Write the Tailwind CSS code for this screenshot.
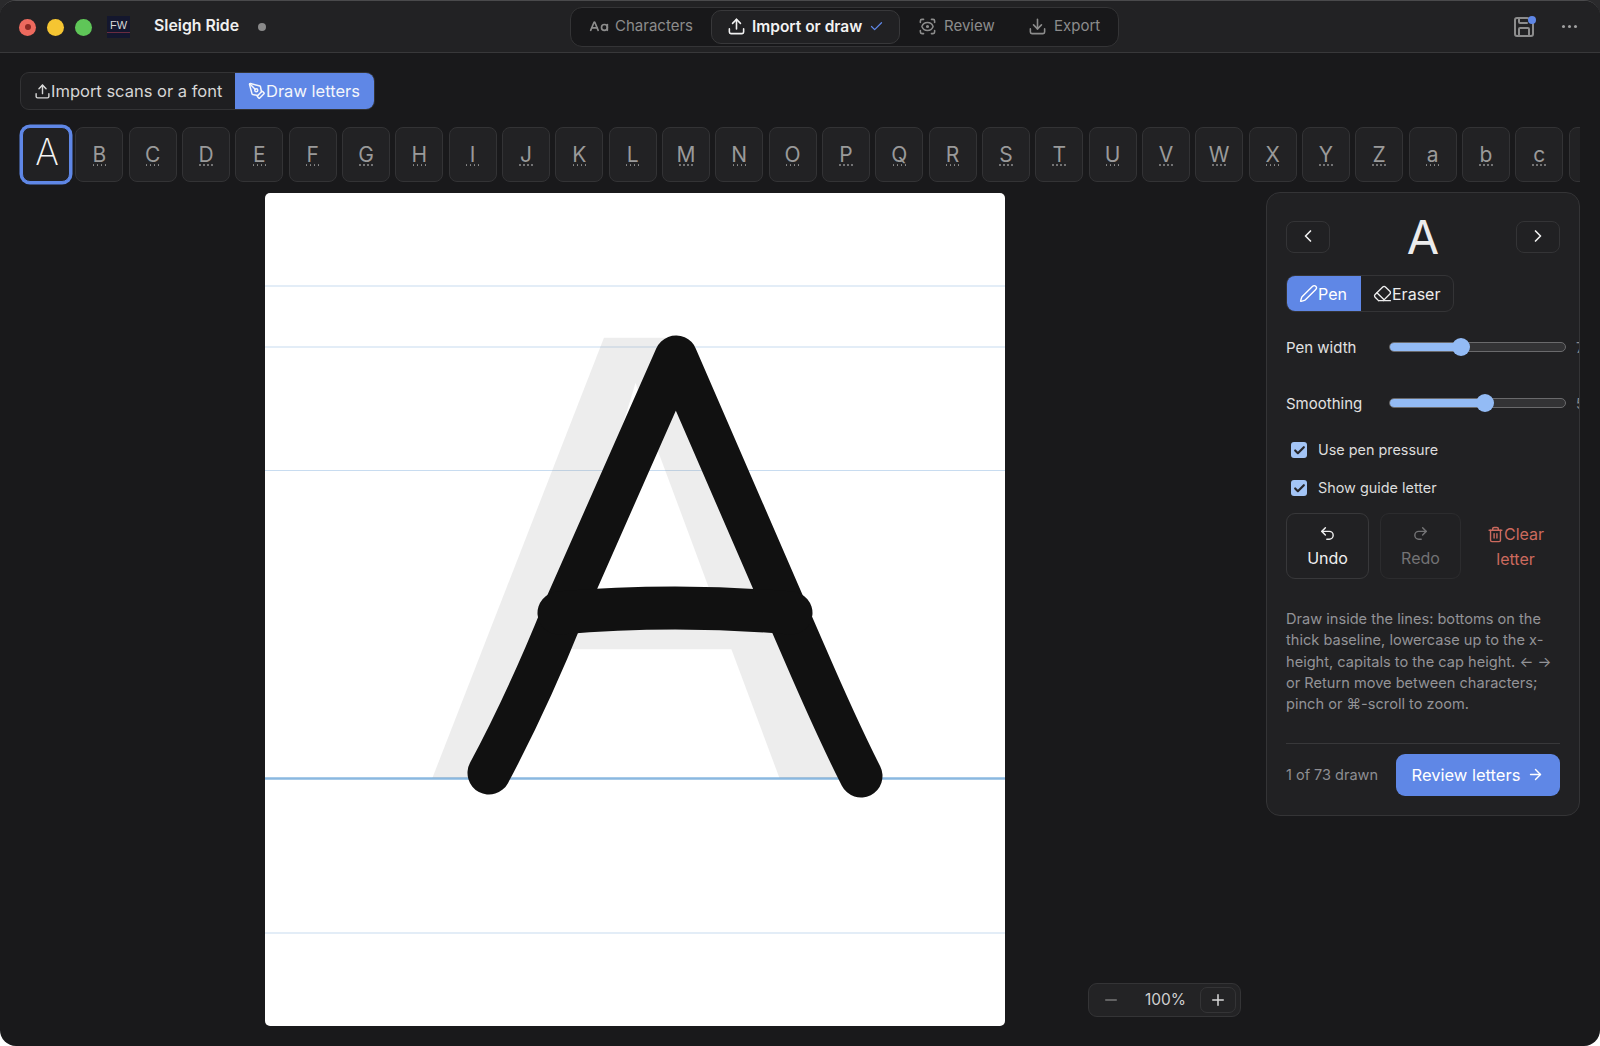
<!DOCTYPE html>
<html lang="en">

<head>
    <meta charset="UTF-8">
    <title>Sleigh Ride</title>
    <script src="https://cdn.jsdelivr.net/npm/@tailwindcss/browser@4"></script>
</head>

<body class="bg-[linear-gradient(#2a2a2c_0,#2a2a2c_60px,#fff_60px)] overflow-hidden font-[Inter,sans-serif]">

    <div class="w-[1600px] h-[1046px] flex flex-col bg-[#19191b] rounded-[16px] overflow-hidden border-t border-[#4a4a4c]">

        <!-- Title bar -->
        <header class="h-[52px] shrink-0 flex items-center bg-[#222224] border-b border-[#38383a]">
            <div class="w-[570px] shrink-0 flex items-center pl-[19px]">
                <span class="mt-[1px] w-[17px] h-[17px] rounded-full bg-[#ed6a5e] flex items-center justify-center"><span class="w-[6px] h-[6px] rounded-full bg-[#8c2a24]"></span></span>
                <span class="mt-[1px] w-[17px] h-[17px] rounded-full bg-[#f5c532] ml-[11px]"></span>
                <span class="mt-[1px] w-[17px] h-[17px] rounded-full bg-[#5fc658] ml-[11px]"></span>
                <span class="w-[23px] h-[22px] ml-[15px] pt-[3px] bg-[#14172e] text-center">
                    <span class="block h-[14px] leading-[13px] text-[11px] text-[#d8d8d8] border-b border-[#6a2c40] font-[Liberation_Sans,sans-serif]">FW</span>
                </span>
                <span class="ml-[24px] -mt-[1px] text-[15.8px] font-semibold text-[#f0f0f0]">Sleigh Ride</span>
                <span class="ml-[19px] w-[8px] h-[8px] rounded-full bg-[#8a8a8a]"></span>
            </div>

            <!-- Steps -->
            <nav class="w-[549px] shrink-0 h-[40px] flex items-center gap-[2px] p-[2px] rounded-[12px] bg-[#18181a] border border-[#343436] text-[15px] text-[#8c8c8c]">
                <span class="h-[34px] w-[136px] pl-[16px] flex items-center gap-[6px]">
                    <svg class="w-[20px] h-[20px]" viewBox="0 0 24 24" fill="none" stroke="currentColor" stroke-width="2" stroke-linecap="round" stroke-linejoin="round"><path d="m2 16 4.039-9.69a.5.5 0 0 1 .923 0L11 16"/><path d="M22 9v7"/><path d="M3.304 13h6.392"/><circle cx="18.5" cy="12.5" r="3.5"/></svg>
                    Characters
                </span>
                <span class="h-[34px] w-[189px] pl-[15px] flex items-center rounded-[10px] bg-[#212123] border border-[#38383a] text-[15.5px] text-[#f2f2f2] font-semibold">
                    <svg class="w-[19px] h-[19px] mr-[6px]" viewBox="0 0 24 24" fill="none" stroke="currentColor" stroke-width="2" stroke-linecap="round" stroke-linejoin="round"><path d="M21 15v4a2 2 0 0 1-2 2H5a2 2 0 0 1-2-2v-4"/><polyline points="17 8 12 3 7 8"/><line x1="12" y1="3" x2="12" y2="15"/></svg>
                    Import or draw
                    <svg class="w-[15px] h-[15px] ml-[7px] text-[#5f87e6]" viewBox="0 0 24 24" fill="none" stroke="currentColor" stroke-width="2" stroke-linecap="round" stroke-linejoin="round"><path d="M20 6 9 17l-5-5"/></svg>
                </span>
                <span class="h-[34px] w-[108px] pl-[16px] flex items-center gap-[7px]">
                    <svg class="w-[19px] h-[19px]" viewBox="0 0 24 24" fill="none" stroke="currentColor" stroke-width="2" stroke-linecap="round" stroke-linejoin="round"><path d="M3 7V5a2 2 0 0 1 2-2h2"/><path d="M17 3h2a2 2 0 0 1 2 2v2"/><path d="M21 17v2a2 2 0 0 1-2 2h-2"/><path d="M7 21H5a2 2 0 0 1-2-2v-2"/><circle cx="12" cy="12" r="1"/><path d="M18.944 12.33a1 1 0 0 0 0-.66 7.5 7.5 0 0 0-13.888 0 1 1 0 0 0 0 .66 7.5 7.5 0 0 0 13.888 0"/></svg>
                    Review
                </span>
                <span class="h-[34px] pl-[16px] flex items-center gap-[7px]">
                    <svg class="w-[19px] h-[19px]" viewBox="0 0 24 24" fill="none" stroke="currentColor" stroke-width="2" stroke-linecap="round" stroke-linejoin="round"><path d="M21 15v4a2 2 0 0 1-2 2H5a2 2 0 0 1-2-2v-4"/><polyline points="7 10 12 15 17 10"/><line x1="12" y1="15" x2="12" y2="3"/></svg>
                    Export
                </span>
            </nav>

            <div class="flex-1 flex items-center justify-end pr-[23px] text-[#8c8c8c]">
                <span class="relative">
                    <svg class="w-[24px] h-[24px]" viewBox="0 0 24 24" fill="none" stroke="currentColor" stroke-width="2" stroke-linecap="round" stroke-linejoin="round"><path d="M15.2 3a2 2 0 0 1 1.4.6l3.8 3.8a2 2 0 0 1 .6 1.4V19a2 2 0 0 1-2 2H5a2 2 0 0 1-2-2V5a2 2 0 0 1 2-2z"/><path d="M17 21v-7a1 1 0 0 0-1-1H8a1 1 0 0 0-1 1v7"/><path d="M7 3v4a1 1 0 0 0 1 1h7"/></svg>
                    <span class="absolute top-[1px] right-0 w-[8px] h-[8px] rounded-full bg-[#5f87e6]"></span>
                </span>
                <span class="ml-[26px] flex gap-[3px]">
                    <span class="w-[3px] h-[3px] rounded-full bg-[#a0a0a0]"></span>
                    <span class="w-[3px] h-[3px] rounded-full bg-[#a0a0a0]"></span>
                    <span class="w-[3px] h-[3px] rounded-full bg-[#a0a0a0]"></span>
                </span>
            </div>
        </header>

        <!-- Import / draw switch -->
        <div class="mt-[19px] ml-[20px] w-fit h-[38px] flex rounded-[9px] border border-[#333335] bg-[#1f1f21] overflow-hidden text-[16.5px] shrink-0">
            <span class="w-[214px] pl-[13px] flex items-center text-[#d6d6d6]">
                <svg class="w-[17px] h-[17px]" viewBox="0 0 24 24" fill="none" stroke="currentColor" stroke-width="2" stroke-linecap="round" stroke-linejoin="round"><path d="M21 15v4a2 2 0 0 1-2 2H5a2 2 0 0 1-2-2v-4"/><polyline points="17 8 12 3 7 8"/><line x1="12" y1="3" x2="12" y2="15"/></svg>
                Import scans or a font
            </span>
            <span class="w-[139px] pl-[13px] flex items-center bg-[#5f87e6] text-[#f4f6fb]">
                <svg class="w-[18px] h-[18px]" viewBox="0 0 24 24" fill="none" stroke="currentColor" stroke-width="2" stroke-linecap="round" stroke-linejoin="round"><path d="M15.707 21.293a1 1 0 0 1-1.414 0l-1.586-1.586a1 1 0 0 1 0-1.414l5.586-5.586a1 1 0 0 1 1.414 0l1.586 1.586a1 1 0 0 1 0 1.414z"/><path d="m18 13-1.375-6.874a1 1 0 0 0-.746-.776L3.235 2.028a1 1 0 0 0-1.207 1.207L5.35 15.879a1 1 0 0 0 .776.746L13 18"/><path d="m2.3 2.3 7.286 7.286"/><circle cx="11" cy="11" r="2"/></svg>
                Draw letters
            </span>
        </div>

        <!-- Glyph strip -->
        <div id="tiras" class="mt-[14px] ml-[19px] w-[1561px] h-[61px] pl-[3px] pt-[3px] flex gap-[5.33px] overflow-hidden shrink-0"></div>

        <!-- Canvas + panel -->
        <main class="flex-1 flex gap-[15px] pl-[20px] pr-[20px] pt-[8px] min-h-0">
            <div class="relative flex-1 flex justify-center pr-[2px]">
                <svg class="w-[740px] h-[833px] rounded-[5px] bg-white" viewBox="-1 0 740 833">
                    <g stroke="#c8dcf0" stroke-width="1.2">
                        <line x1="-1" y1="93" x2="739" y2="93"/>
                        <line x1="-1" y1="154" x2="739" y2="154"/>
                        <line x1="-1" y1="277.5" x2="739" y2="277.5"/>
                        <line x1="-1" y1="740" x2="739" y2="740"/>
                    </g>
                    <line x1="-1" y1="585.5" x2="739" y2="585.5" stroke="#8ab8e0" stroke-width="2.5"/>
                    <text transform="translate(369 585) scale(0.955 1)" text-anchor="middle" font-family="Liberation Sans" font-size="640" fill="#9a9a9a" fill-opacity="0.18">A</text>
                    <g fill="none" stroke="#111" stroke-width="43" stroke-linecap="round" stroke-linejoin="round">
                        <path d="M223 580C254 522 274 477 297 420L410 164L521 420C544 472 564 522 595 583"/>
                        <path d="M293 420Q409 410 525 420"/>
                    </g>
                </svg>

                <!-- Zoom -->
                <div class="absolute right-[10px] bottom-[29px] w-[153px] h-[34px] flex items-center justify-between pl-[5px] pr-[8px] rounded-[9px] bg-[#232325] border border-[#343436] text-[15.5px] text-[#d0d0d0]">
                    <span class="w-[34px] h-[26px] flex items-center justify-center rounded-[7px] text-[#777]">
                        <svg class="w-[18px] h-[18px]" viewBox="0 0 24 24" fill="none" stroke="currentColor" stroke-width="2" stroke-linecap="round"><path d="M5 12h14"/></svg>
                    </span>
                    <span class="ml-[3px]">100%</span>
                    <span class="w-[36px] h-[26px] -mr-[4px] flex items-center justify-center rounded-[7px] border border-[#343436] text-[#d8d8d8]">
                        <svg class="w-[18px] h-[18px]" viewBox="0 0 24 24" fill="none" stroke="currentColor" stroke-width="2" stroke-linecap="round"><path d="M5 12h14"/><path d="M12 5v14"/></svg>
                    </span>
                </div>
            </div>

            <!-- Side panel -->
            <aside class="w-[314px] h-[624px] shrink-0 -mt-[1px] px-[19px] pt-[28px] rounded-[14px] bg-[#212123] border border-[#343436] overflow-hidden">
                <div class="h-[32px] flex items-center justify-between">
                    <span class="w-[44px] h-[32px] flex items-center justify-center rounded-[8px] border border-[#343436] text-[#f0f0f0]">
                        <svg class="w-[20px] h-[20px] -mt-[2px]" viewBox="0 0 24 24" fill="none" stroke="currentColor" stroke-width="2" stroke-linecap="round" stroke-linejoin="round"><path d="m15 18-6-6 6-6"/></svg>
                    </span>
                    <span class="text-[47px] leading-[32px] text-[#ececec] font-normal">A</span>
                    <span class="w-[44px] h-[32px] flex items-center justify-center rounded-[8px] border border-[#343436] text-[#f0f0f0]">
                        <svg class="w-[20px] h-[20px] -mt-[2px]" viewBox="0 0 24 24" fill="none" stroke="currentColor" stroke-width="2" stroke-linecap="round" stroke-linejoin="round"><path d="m9 18 6-6-6-6"/></svg>
                    </span>
                </div>

                <div class="mt-[22px] w-[168px] h-[37px] flex rounded-[9px] border border-[#343436] overflow-hidden text-[16px] text-[#ececec]">
                    <span class="w-[74px] pl-[12px] flex items-center bg-[#5f87e6] text-white">
                        <svg class="w-[19px] h-[19px]" viewBox="0 0 24 24" fill="none" stroke="currentColor" stroke-width="1.75" stroke-linecap="round" stroke-linejoin="round"><path d="M21.174 6.812a1 1 0 0 0-3.986-3.987L3.842 16.174a2 2 0 0 0-.5.83l-1.321 4.352a.5.5 0 0 0 .623.622l4.353-1.32a2 2 0 0 0 .83-.497z"/></svg>
                        Pen
                    </span>
                    <span class="flex-1 pl-[12px] flex items-center">
                        <svg class="w-[19px] h-[19px]" viewBox="0 0 24 24" fill="none" stroke="currentColor" stroke-width="1.75" stroke-linecap="round" stroke-linejoin="round"><path d="m7 21-4.3-4.3c-1-1-1-2.5 0-3.4l9.6-9.6c1-1 2.5-1 3.4 0l5.6 5.6c1 1 1 2.5 0 3.4L13 21"/><path d="M22 21H7"/><path d="m5 11 9 9"/></svg>
                        Eraser
                    </span>
                </div>

                <!-- Sliders -->
                <div class="mt-[25px] h-[20px] flex items-center text-[15px] text-[#e2e2e2]">
                    <span class="w-[103px] shrink-0 mt-[2px]">Pen width</span>
                    <span class="relative w-[177px] h-[10px] shrink-0 rounded-full bg-[#333335] border border-[#6a6a6c]">
                        <span class="absolute left-0 top-0 bottom-0 w-[72px] rounded-l-full bg-[#93bbf5]"></span>
                        <span class="absolute left-[62px] -top-[5px] w-[18px] h-[18px] rounded-full bg-[#93bbf5]"></span>
                    </span>
                    <span class="ml-[10px] shrink-0 text-[#8c8c8c] text-[14px]">7</span>
                </div>
                <div class="mt-[36px] h-[20px] flex items-center text-[15px] text-[#e2e2e2]">
                    <span class="w-[103px] shrink-0 mt-[2px]">Smoothing</span>
                    <span class="relative w-[177px] h-[10px] shrink-0 rounded-full bg-[#333335] border border-[#6a6a6c]">
                        <span class="absolute left-0 top-0 bottom-0 w-[96px] rounded-l-full bg-[#93bbf5]"></span>
                        <span class="absolute left-[86px] -top-[5px] w-[18px] h-[18px] rounded-full bg-[#93bbf5]"></span>
                    </span>
                    <span class="ml-[10px] shrink-0 text-[#8c8c8c] text-[14px]">5</span>
                </div>

                <!-- Checks -->
                <label class="mt-[27px] h-[20px] pl-[5px] flex items-center gap-[11px] text-[14.4px] text-[#dcdcdc]">
                    <span class="w-[16px] h-[16px] rounded-[3px] bg-[#a3c4f5] flex items-center justify-center text-[#26262a]">
                        <svg class="w-[13px] h-[13px]" viewBox="0 0 24 24" fill="none" stroke="currentColor" stroke-width="4" stroke-linecap="round" stroke-linejoin="round"><path d="M20 6 9 17l-5-5"/></svg>
                    </span>
                    Use pen pressure
                </label>
                <label class="mt-[18px] h-[20px] pl-[5px] flex items-center gap-[11px] text-[14.4px] text-[#dcdcdc]">
                    <span class="w-[16px] h-[16px] rounded-[3px] bg-[#a3c4f5] flex items-center justify-center text-[#26262a]">
                        <svg class="w-[13px] h-[13px]" viewBox="0 0 24 24" fill="none" stroke="currentColor" stroke-width="4" stroke-linecap="round" stroke-linejoin="round"><path d="M20 6 9 17l-5-5"/></svg>
                    </span>
                    Show guide letter
                </label>

                <!-- Actions -->
                <div class="mt-[15px] h-[66px] flex gap-[11px] text-[16px] leading-[25px]">
                    <span class="w-[83px] pt-[3px] flex flex-col items-center justify-center rounded-[9px] border border-[#38383a] text-[#f0f0f0]">
                        <svg class="w-[17px] h-[17px] mb-[4px]" viewBox="0 0 24 24" fill="none" stroke="currentColor" stroke-width="2" stroke-linecap="round" stroke-linejoin="round"><path d="M9 14 4 9l5-5"/><path d="M4 9h10.5a5.5 5.5 0 0 1 5.5 5.5a5.5 5.5 0 0 1-5.5 5.5H11"/></svg>
                        Undo
                    </span>
                    <span class="w-[81px] pt-[3px] flex flex-col items-center justify-center rounded-[9px] border border-[#2c2c2e] text-[#737375]">
                        <svg class="w-[17px] h-[17px] mb-[4px]" viewBox="0 0 24 24" fill="none" stroke="currentColor" stroke-width="2" stroke-linecap="round" stroke-linejoin="round"><path d="m15 14 5-5-5-5"/><path d="M20 9H9.5A5.5 5.5 0 0 0 4 14.5A5.5 5.5 0 0 0 9.5 20H13"/></svg>
                        Redo
                    </span>
                    <span class="flex-1 pt-[1px] -ml-[1px] flex flex-col items-center justify-center text-[#cc6a5e]">
                        <span class="flex items-center">
                            <svg class="w-[17px] h-[17px]" viewBox="0 0 24 24" fill="none" stroke="currentColor" stroke-width="2" stroke-linecap="round" stroke-linejoin="round"><path d="M3 6h18"/><path d="M19 6v14c0 1-1 2-2 2H7c-1 0-2-1-2-2V6"/><path d="M8 6V4c0-1 1-2 2-2h4c1 0 2 1 2 2v2"/><line x1="10" y1="11" x2="10" y2="17"/><line x1="14" y1="11" x2="14" y2="17"/></svg>
                            Clear
                        </span>
                        letter
                    </span>
                </div>

                <p class="mt-[30px] text-[14.6px] leading-[21.3px] text-[#939397]">Draw inside the lines: bottoms on the thick baseline, lowercase up to the x-height, capitals to the cap height. ← → or Return move between characters; pinch or ⌘-scroll to zoom.</p>

                <div class="mt-[28px] pt-[10px] border-t border-[#38383a] flex items-center justify-between">
                    <span class="-mt-[2px] text-[14.5px] text-[#8e8e92]">1 of 73 drawn</span>
                    <span class="w-[164px] h-[42px] pb-[1px] flex items-center justify-center gap-[7px] rounded-[9px] bg-[#5f87e6] text-[16.5px] text-white">
                        Review letters
                        <svg class="w-[17px] h-[17px]" viewBox="0 0 24 24" fill="none" stroke="currentColor" stroke-width="2" stroke-linecap="round" stroke-linejoin="round"><path d="M5 12h14"/><path d="m12 5 7 7-7 7"/></svg>
                    </span>
                </div>
            </aside>
        </main>
    </div>

    <script>
        // Tira de letras
        const tiras = document.getElementById('tiras');
        const letras = 'ABCDEFGHIJKLMNOPQRSTUVWXYZabc'.split('');

        letras.forEach((letra, index) => {
            const tile = document.createElement('div');
            if (index === 0) {
                tile.className = 'w-[48px] h-[55px] shrink-0 flex items-center justify-center rounded-[8px] bg-[#212123] border border-[#5f87e6] ring-[2.5px] ring-[#5f87e6]';
                tile.innerHTML = `<span class="text-[36px] leading-none font-extralight text-[#f4f4f4] -mt-[6px] ml-[2px]">${letra}</span>`;
            } else {
                tile.className = 'w-[48px] h-[55px] shrink-0 flex flex-col items-center justify-center rounded-[8px] bg-[#222224] border border-[#333335]';
                tile.innerHTML = `
          <span class="mt-[3px] text-[21px] leading-[17px] text-[#9a9a9a]">${letra}</span>
          <span class="flex gap-[2.5px] mt-[1px]">
            <i class="w-[1.5px] h-[1.5px] rounded-full bg-[#8f8f8f]"></i>
            <i class="w-[1.5px] h-[1.5px] rounded-full bg-[#8f8f8f]"></i>
            <i class="w-[1.5px] h-[1.5px] rounded-full bg-[#8f8f8f]"></i>
            <i class="w-[1.5px] h-[1.5px] rounded-full bg-[#8f8f8f]"></i>
          </span>`;
            }
            tiras.appendChild(tile);
        });

        // Última tecla, cortada pela borda
        const resto = document.createElement('div');
        resto.className = 'w-[48px] h-[55px] shrink-0 rounded-[8px] bg-[#222224] border border-[#333335]';
        tiras.appendChild(resto);
    </script>

</body>

</html>
